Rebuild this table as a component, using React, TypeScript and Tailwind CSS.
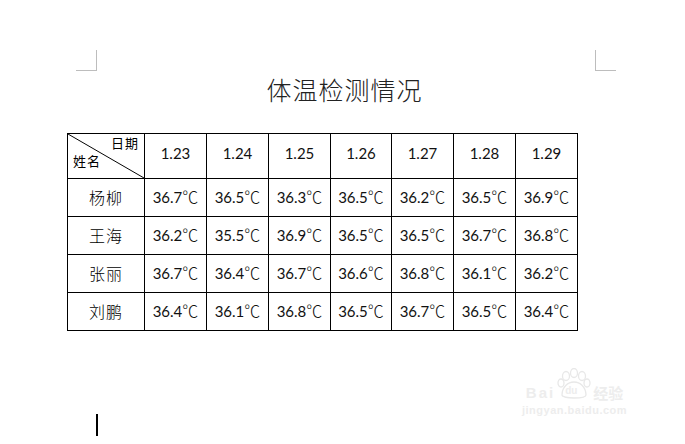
const dates = ["1.23", "1.24", "1.25", "1.26", "1.27", "1.28", "1.29"];

const rows: { name: string; temps: string[] }[] = [
  { name: "杨柳", temps: ["36.7", "36.5", "36.3", "36.5", "36.2", "36.5", "36.9"] },
  { name: "王海", temps: ["36.2", "35.5", "36.9", "36.5", "36.5", "36.7", "36.8"] },
  { name: "张丽", temps: ["36.7", "36.4", "36.7", "36.6", "36.8", "36.1", "36.2"] },
  { name: "刘鹏", temps: ["36.4", "36.1", "36.8", "36.5", "36.7", "36.5", "36.4"] },
];

const colWidths = [62, 62, 62, 61, 62, 62, 62];

function Watermark() {
  return (
    <div className="pointer-events-none absolute left-[522px] top-[368px] flex flex-col items-center text-[#ededed]">
      <div className="flex items-end">
        <span className="font-['Liberation_Sans',sans-serif] text-[15px] font-bold leading-none tracking-[2px]">Bai</span>
        <div className="relative mx-[2px] h-[32px] w-[34px]">
          <svg width="34" height="32" viewBox="0 0 34 32" fill="none" stroke="#e8e8e8" strokeWidth="1.3">
            <ellipse cx="9" cy="8" rx="3.5" ry="4.5" />
            <ellipse cx="17" cy="5" rx="3.5" ry="4.5" />
            <ellipse cx="25" cy="8" rx="3.5" ry="4.5" />
            <ellipse cx="4" cy="15" rx="3" ry="4" />
            <ellipse cx="30" cy="15" rx="3" ry="4" />
            <path d="M5 27 C5 19 11 14 17 14 C23 14 29 19 29 27 C29 31 5 31 5 27 Z" />
          </svg>
          <span className="absolute left-[8px] top-[18px] font-['Liberation_Sans',sans-serif] text-[10px] font-bold leading-none">du</span>
        </div>
        <span className="font-['Noto_Sans_CJK_SC',sans-serif] text-[15px] font-bold leading-none">经验</span>
      </div>
      <span className="mt-[5px] font-['Liberation_Sans',sans-serif] text-[11px] font-bold leading-none tracking-[0.5px]">jingyan.baidu.com</span>
    </div>
  );
}

export default function App() {
  return (
    <div className="relative h-[444px] w-[685px] overflow-hidden bg-white">
      <div className="flex justify-between pl-[76px] pr-[69px] pt-[50px]">
        <div className="h-[21px] w-[21px] border-b border-r border-[#bdbdbd]" />
        <div className="h-[21px] w-[21px] border-b border-l border-[#bdbdbd]" />
      </div>

      <h1 className="pl-[4px] text-center font-['Noto_Sans_CJK_SC',sans-serif] text-[25px] font-light leading-[36px] tracking-[1px] text-[#222]">
        体温检测情况
      </h1>

      <table className="ml-[67px] mt-[26px] table-fixed border-collapse text-black">
        <colgroup>
          <col className="w-[77px]" />
          {colWidths.map((w, i) => (
            <col key={i} style={{ width: w }} />
          ))}
        </colgroup>
        <thead>
          <tr className="h-[44px]">
            <th className="relative border border-black p-0 font-normal">
              <svg className="absolute inset-0" width="100%" height="100%" preserveAspectRatio="none" viewBox="0 0 77 44">
                <line x1="0" y1="0" x2="77" y2="44" stroke="black" strokeWidth="1" />
              </svg>
              <div className="flex h-[44px] flex-col justify-between px-[5px] pb-[9px] pt-[1px] font-['Noto_Sans_CJK_SC',sans-serif] text-[13px] leading-[16px] tracking-[1px]">
                <span className="self-end">日期</span>
                <span className="self-start">姓名</span>
              </div>
            </th>
            {dates.map((d) => (
              <th key={d} className="border border-black pb-[6px] text-center font-['Lato',sans-serif] text-[15px] font-normal text-[#111]">
                {d}
              </th>
            ))}
          </tr>
        </thead>
        <tbody>
          {rows.map((r) => (
            <tr key={r.name} className="h-[38px]">
              <td className="border border-black pb-[2px] text-center font-['Noto_Sans_CJK_SC',sans-serif] text-[16px] font-light tracking-[1px]">
                {r.name}
              </td>
              {r.temps.map((t, i) => (
                <td key={i} className="border border-black pb-[2px] text-center font-['Lato',sans-serif] text-[15px] text-[#111]">
                  {t}
                  <span className="font-['Noto_Sans_CJK_SC',sans-serif] text-[16px] font-light">℃</span>
                </td>
              ))}
            </tr>
          ))}
        </tbody>
      </table>

      <div className="ml-[96px] mt-[83px] h-[22px] w-[2px] bg-black" />

      <Watermark />
    </div>
  );
}
